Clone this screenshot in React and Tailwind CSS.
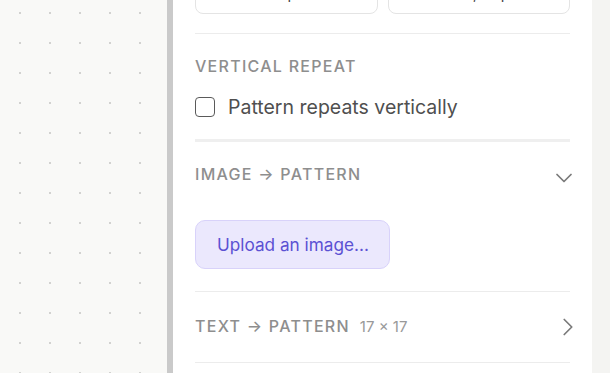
import { ChevronDown, ChevronRight } from 'lucide-react';

const SectionLabel = ({ children }) => (
    <span className="text-[16px] leading-5 font-medium tracking-[0.08em] text-[#8e8e8e] uppercase">{children}</span>
);

export default function App() {
    return (
        <div className="flex h-[373px] w-[610px] overflow-hidden bg-[#f4f4f2] font-['Inter',sans-serif]">
            {/* canvas */}
            <div className="w-[167px] h-full bg-[#f9f9f7] bg-[radial-gradient(circle,#d2d2d0_1px,transparent_1.3px)] bg-[length:30px_30px] bg-[position:5px_-2px]" />
            <div className="w-[6px] h-full bg-[#cacaca]" />

            {/* side panel */}
            <div className="w-[419px] h-full bg-white px-[22px] flex flex-col">
                <div className="flex gap-[10px] -mt-[26px]">
                    <div className="flex-1 h-[40px] rounded-[8px] border border-[#e4e4e4] flex items-center justify-center text-[15px] text-[#444]">16 px</div>
                    <div className="flex-1 h-[40px] rounded-[8px] border border-[#e4e4e4] flex items-center justify-center text-[15px] text-[#444]">Auto, 16 px</div>
                </div>

                <div className="mt-[19px] h-px bg-[#ececec]" />

                <div className="mt-[22px] h-5 flex items-center">
                    <SectionLabel>Vertical repeat</SectionLabel>
                </div>
                <label className="mt-[21px] h-5 flex items-center gap-[13px]">
                    <span className="w-5 h-5 rounded-[4px] border-[1.5px] border-[#5a5a5a]" />
                    <span className="text-[19.5px] leading-5 text-[#4f4f4f]">Pattern repeats vertically</span>
                </label>

                <div className="mt-[22px] h-[3px] bg-[#efefef]" />

                <div className="mt-[22px] flex items-center justify-between h-5">
                    <SectionLabel>Image → Pattern</SectionLabel>
                    <ChevronDown className="w-[28px] h-[28px] text-[#7a7a7a] mt-2 -mr-[8px]" strokeWidth={1.5} />
                </div>

                <button className="mt-[36px] w-[195px] h-[49px] rounded-[10px] bg-[#ebe8fd] border border-[#d8d2fa] text-[17.2px] leading-5 text-[#5b51d3] text-left pl-[21px]">
                    Upload an image...
                </button>

                <div className="mt-[22px] h-px bg-[#ececec]" />

                <div className="h-[70px] flex items-center justify-between">
                    <div className="flex items-baseline gap-[10px]">
                        <SectionLabel>Text → Pattern</SectionLabel>
                        <span className="text-[15px] text-[#999]">17 × 17</span>
                    </div>
                    <ChevronRight className="w-[30px] h-[30px] text-[#7a7a7a] -mr-[13px]" strokeWidth={1.4} />
                </div>

                <div className="h-px bg-[#ececec]" />
            </div>
        </div>
    );
}
